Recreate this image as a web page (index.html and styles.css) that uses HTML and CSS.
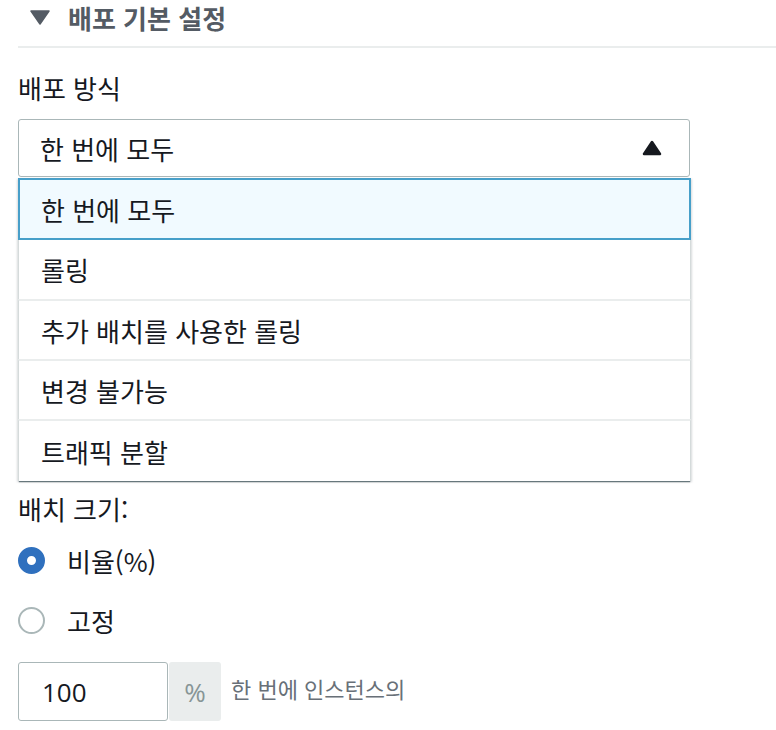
FILE: index.html
```html
<!DOCTYPE html>
<html lang="ko">
<head>
<meta charset="utf-8">
<link rel="stylesheet" href="styles.css">
</head>
<body>
<div class="section">
  <div class="header">
    <svg class="toggle" width="20" height="15" viewBox="0 0 20 15"><path d="M1 1 H19 L10 14 Z" fill="#545b64" stroke="#545b64" stroke-width="1.5" stroke-linejoin="round"/></svg>
    <span class="title">배포 기본 설정</span>
  </div>
  <div class="label">배포 방식</div>
  <div class="select">
    <span>한 번에 모두</span>
    <svg class="caret" width="20" height="16" viewBox="0 0 20 16"><path d="M10 2 L18 14 H2 Z" fill="#16191f" stroke="#16191f" stroke-width="2.5" stroke-linejoin="round"/></svg>
  </div>
  <ul class="menu">
    <li class="item selected">한 번에 모두</li>
    <li class="item">롤링</li>
    <li class="item">추가 배치를 사용한 롤링</li>
    <li class="item">변경 불가능</li>
    <li class="item last">트래픽 분할</li>
  </ul>
  <div class="label batch">배치 크기:</div>
  <div class="radio-row">
    <span class="radio checked"></span>
    <span class="radio-text">비율(%)</span>
  </div>
  <div class="radio-row">
    <span class="radio"></span>
    <span class="radio-text">고정</span>
  </div>
  <div class="input-row">
    <div class="input">100</div>
    <div class="addon">%</div>
    <div class="hint">한 번에 인스턴스의</div>
  </div>
</div>
</body>
</html>
```
FILE: styles.css
```css
html, body {
  margin: 0;
  padding: 0;
  background: #ffffff;
}
body {
  font-family: "Noto Sans CJK KR", "Noto Sans", sans-serif;
  color: #16191f;
  font-size: 26px;
}
.section {
  padding-left: 18px;
}
.header {
  display: flex;
  align-items: flex-start;
  height: 46px;
  border-bottom: 2px solid #eaeded;
}
.toggle {
  margin-left: 12px;
  margin-top: 10px;
}
.title {
  margin-left: 18px;
  font-weight: bold;
  color: #545b64;
  line-height: 36px;
}
.label {
  line-height: 30px;
  margin-top: 25px;
}
.select {
  margin-top: 16px;
  width: 672px;
  height: 58px;
  box-sizing: border-box;
  border: 1px solid #aab7b8;
  border-radius: 3px;
  display: flex;
  align-items: center;
  justify-content: space-between;
  padding: 0 27px 0 21px;
}
.menu {
  list-style: none;
  margin: 1px 0 0 0;
  padding: 0;
  width: 673px;
  box-sizing: border-box;
  background: #ffffff;
  box-shadow: 0 2px 1px -1px rgba(0, 28, 36, 0.5), 1px 1px 2px rgba(0, 28, 36, 0.15), -1px 1px 2px rgba(0, 28, 36, 0.15);
}
.item {
  height: 60px;
  box-sizing: border-box;
  display: flex;
  align-items: center;
  padding-left: 22px;
  border-top: 2px solid #eaeded;
  border-left: 1px solid #d5dbdb;
  border-right: 1px solid #d5dbdb;
}
.item.selected {
  height: 62px;
  border: 2px solid #479fc9;
  background: #f1faff;
  padding-left: 21px;
}
.item.selected + .item {
  border-top: none;
  height: 59px;
}
.item.last {
  height: 62px;
}
.label.batch {
  margin-top: 13px;
}
.radio-row {
  display: flex;
  align-items: center;
  height: 60px;
}
.batch + .radio-row {
  margin-top: 6px;
}
.radio {
  width: 27px;
  height: 27px;
  box-sizing: border-box;
  border-radius: 50%;
  border: 2px solid #aab7b8;
  background: #ffffff;
}
.radio.checked {
  border: 9.5px solid #2f70be;
}
.radio-text {
  margin-left: 22px;
}
.input-row {
  display: flex;
  align-items: center;
  margin-top: 12px;
}
.input {
  width: 150px;
  height: 59px;
  box-sizing: border-box;
  border: 1px solid #aab7b8;
  border-radius: 3px;
  display: flex;
  align-items: center;
  padding-left: 23px;
  font-family: "Open Sans", "Noto Sans CJK KR", sans-serif;
  font-size: 26px;
}
.addon {
  width: 52px;
  height: 59px;
  margin-left: 1px;
  background: #eaeded;
  border-radius: 3px;
  display: flex;
  align-items: center;
  justify-content: center;
  color: #879596;
  font-family: "Open Sans", "Noto Sans CJK KR", sans-serif;
  font-size: 26px;
}
.hint {
  margin-left: 10px;
  color: #687078;
  font-size: 22px;
  margin-top: -8px;
}
```
